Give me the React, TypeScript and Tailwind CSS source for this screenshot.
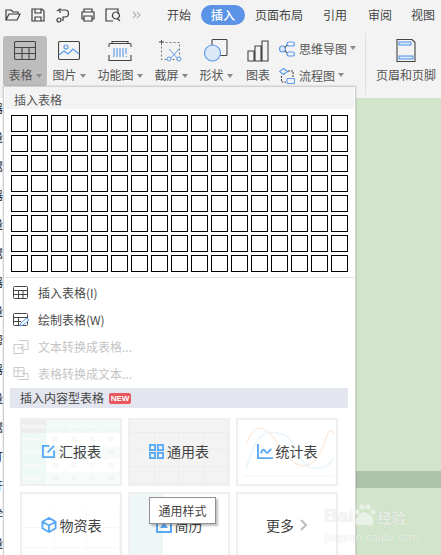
import React from "react";

const S = "#3c3c3c";
const B = "#5b9bea";
const font = { fontFamily: '"Noto Sans CJK SC", "Liberation Sans", sans-serif' };

function Caret() {
  return <span className="inline-block ml-[3px] mb-[2px] w-0 h-0 border-x-[3px] border-x-transparent border-t-[4px] border-t-[#8a8a8a]" />;
}

function QA({ children }: { children: React.ReactNode }) {
  return <svg width="16" height="16" viewBox="0 0 16 16" fill="none" stroke={S} strokeWidth="1.2" className="shrink-0">{children}</svg>;
}

function Tool({ w, label, caret, active, children }: { w: string; label: string; caret?: boolean; active?: boolean; children: React.ReactNode }) {
  return (
    <div className={`${w} h-[50px] rounded-[3px] flex flex-col items-center shrink-0 ${active ? "bg-[#bdbdbd]" : ""}`}>
      <div className="h-[29px] flex items-center justify-center">{children}</div>
      <div className="mt-[2px] text-[12px] leading-[16px] text-[#555] whitespace-nowrap">{label}{caret && <Caret />}</div>
    </div>
  );
}

function Card({ label, icon, children, className = "" }: { label: string; icon?: React.ReactNode; children?: React.ReactNode; className?: string }) {
  return (
    <div className={`relative w-[102px] h-[68px] border-2 border-[#efefef] overflow-hidden flex items-center justify-center pb-[2px] ${className}`}>
      <div className="absolute inset-0 opacity-50">{children}</div>
      <div className="relative flex items-center gap-[3px] text-[14px] text-[#444]">{icon}{label}</div>
    </div>
  );
}

function MenuRow({ label, disabled, children }: { label: string; disabled?: boolean; children: React.ReactNode }) {
  return (
    <div className={`h-[27px] flex items-center pl-[7px] text-[12px] ${disabled ? "text-[#c4c4c4]" : "text-[#4a4a4a]"}`}>
      <svg width="18" height="16" viewBox="0 0 18 16" fill="none" stroke={disabled ? "#c8c8c8" : "#444"} strokeWidth="1" className="shrink-0">{children}</svg>
      <span className="ml-[8px]">{label}</span>
    </div>
  );
}

const leftGlyphs = ["器", "量", "鬻", "器", "量", "鬻", "器", "量", "帮", "器", "量", "鬻", "打", "开", "学", "量"];
const reportCols = ["Alpha", "Beta", "Gamma", "Delta"];

export default function App() {
  return (
    <div className="relative w-[441px] h-[555px] overflow-hidden bg-[#f3f3f3]" style={font}>
      {/* title row */}
      <div className="h-[30px] flex items-center pl-[5px] text-[12px] text-[#444] whitespace-nowrap">
        <div className="flex items-center gap-[9px] w-[162px]">
          <QA><path d="M1 13V3h5l2 2h5v2M1 13l3-6h11l-3 6z" /></QA>
          <QA><path d="M2 2h10l2 2v10H2zM5 2v4h6V2M5 14v-4h6v4" /></QA>
          <QA><path d="M6 3h4a3 3 0 0 1 0 7H8v4M2 4l3-2v4M2 13a2 2 0 1 0 4 0 2 2 0 0 0-4 0" /></QA>
          <QA><path d="M4 5V2h8v3M4 12H2V5h12v7h-2M4 9h8v5H4z" /></QA>
          <QA><path d="M13 7V2H1v12h7M11 12a3.5 3.5 0 1 0-.1 0M12 11l3 3" /></QA>
          <svg width="11" height="8" viewBox="0 0 11 8" fill="none" stroke="#b5b5b5" strokeWidth="1.2" className="shrink-0"><path d="M3 1l3 3-3 3M7 1l3 3-3 3" /></svg>
        </div>
        <span className="w-[34px]">开始</span>
        <span className="w-[44px] h-[20px] rounded-full bg-[#5b93e6] text-white font-medium flex items-center justify-center">插入</span>
        <span className="ml-[10px]">页面布局</span>
        <span className="ml-[20px]">引用</span>
        <span className="ml-[21px]">审阅</span>
        <span className="ml-[19px]">视图</span>
      </div>

      {/* ribbon */}
      <div className="h-[68px] pt-[6px] pl-[3px] flex">
        <Tool w="w-[44px]" label="表格" caret active>
          <svg width="22" height="19" viewBox="0 0 22 19" fill="none" stroke="#444" strokeWidth="1.1"><rect x="0.5" y="0.5" width="21" height="18" rx="1.5" /><path d="M1 6.5h20M1 12.5h20M8 6.5v12M15 6.5v12" /></svg>
        </Tool>
        <Tool w="w-[38px] ml-[3px]" label="图片" caret>
          <svg width="22" height="19" viewBox="0 0 22 19" fill="none" stroke="#444" strokeWidth="1.1"><rect x="0.5" y="0.5" width="21" height="18" rx="1.5" /><circle cx="8" cy="6" r="2" stroke={B} /><path d="M1 14l5-4 4 3 5-5 6 5" stroke={B} /></svg>
        </Tool>
        <Tool w="w-[48px] ml-[8px]" label="功能图" caret>
          <svg width="24" height="22" viewBox="0 0 24 22" fill="none" stroke="#444" strokeWidth="1.1"><path d="M4 3V1.5h16V3M1 7V4.5a1 1 0 0 1 1-1h20a1 1 0 0 1 1 1V7M1 15v5.5h22V15" /><path d="M6 8v9M9 8v9M12 8v9M15 8v9M18 8v6M18 16v1" stroke={B} /></svg>
        </Tool>
        <Tool w="w-[42px] ml-[6px]" label="截屏" caret>
          <svg width="24" height="22" viewBox="0 0 24 22" fill="none" strokeWidth="1"><path d="M0 2h5M2.5 0v5" stroke="#444" /><rect x="2.5" y="2.5" width="18" height="17" stroke="#777" strokeDasharray="2 2" /><path d="M10 9l9 10M20 9l-9 10" stroke={B} /><circle cx="10" cy="19" r="2" fill="#f3f3f3" stroke={B} /><circle cx="20" cy="19" r="2" fill="#f3f3f3" stroke={B} /></svg>
        </Tool>
        <Tool w="w-[38px] ml-[5px]" label="形状" caret>
          <svg width="24" height="23" viewBox="0 0 24 23" fill="none" strokeWidth="1.1"><rect x="8" y="0.5" width="15" height="16" rx="1" stroke="#444" /><circle cx="8.5" cy="14" r="8" fill="#dce8f8" stroke={B} /></svg>
        </Tool>
        <Tool w="w-[32px] ml-[7px]" label="图表">
          <svg width="22" height="22" viewBox="0 0 22 22" fill="none" stroke="#444" strokeWidth="1.1"><path d="M1 21V11h6v10zM8 21V6h6v15zM15 21V1h6v20z" /></svg>
        </Tool>
        <div className="ml-[5px] w-[78px] -mt-px shrink-0 flex flex-col text-[12px] text-[#555]">
          <div className="h-[27px] flex items-center whitespace-nowrap">
            <svg width="16" height="16" viewBox="0 0 16 16" fill="none" stroke={B} strokeWidth="1.1" className="shrink-0 mr-[4px]"><circle cx="3.5" cy="8" r="3" fill="#dce8f8" /><rect x="8" y="1" width="7.5" height="4" rx="2" /><rect x="8" y="11" width="7.5" height="4" rx="2" /><path d="M6 6.5l2-2.5M6 9.5l2 2.5" stroke="#444" /></svg>
            思维导图<Caret />
          </div>
          <div className="h-[27px] flex items-center whitespace-nowrap">
            <svg width="16" height="16" viewBox="0 0 16 16" fill="none" stroke={B} strokeWidth="1.1" className="shrink-0 mr-[4px]"><path d="M4.5 0.5l4 3-4 3-4-3z" /><rect x="8" y="10.5" width="7.5" height="5" rx="1" /><path d="M9 3h5v6M2.5 8v6H7" stroke="#444" strokeDasharray="2 1" /></svg>
            流程图<Caret />
          </div>
        </div>
        <div className="w-px h-[62px] -mt-[3px] ml-[8px] bg-[#e0e0e0] shrink-0" />
        <Tool w="w-[62px] ml-[9px]" label="页眉和页脚">
          <svg width="20" height="23" viewBox="0 0 20 23" fill="none" strokeWidth="1.1"><path d="M1 0.5h15l3 3v19H1z" stroke="#444" /><rect x="3" y="3" width="12" height="3" stroke={B} fill="#dce8f8" /><rect x="3" y="17" width="14" height="3" stroke={B} fill="#dce8f8" /></svg>
        </Tool>
      </div>

      {/* document background */}
      <div className="absolute left-0 right-0 top-[98px] bottom-0 bg-[#d0e5ca]">
        <div className="absolute left-0 right-0 top-[373px] h-[17px] bg-[#adc3a9]" />
        <div className="absolute left-0 top-0 bottom-0 w-[4px] bg-white overflow-hidden text-[11px] leading-[20px] text-[#222]">
          {leftGlyphs.map((g, i) => <div key={i} className="w-[12px] -ml-[8px] h-[29px]">{g}</div>)}
        </div>
      </div>

      {/* dropdown panel */}
      <div className="absolute left-[3px] top-[86px] w-[353px] h-[469px] bg-white border-l border-t border-r border-[#d0d0d0] shadow-[0_0_2px_rgba(0,0,0,0.2)]">
        <div className="h-[22px] mx-px bg-[#f3f3f3] pl-[9px] pt-[3px] flex items-center text-[12px] text-[#555]">插入表格</div>
        <div className="ml-[7px] mt-[6px] grid grid-cols-[repeat(17,17px)] auto-rows-[17px] gap-[3px]">
          {Array.from({ length: 136 }).map((_, i) => <div key={i} className="border border-black bg-white" />)}
        </div>
        <div className="mt-[5px] h-px bg-[#e2e2e2] mx-px" />
        <div className="mt-[1px] mb-[1px] pl-px">
          <MenuRow label="插入表格(I)"><rect x="1.5" y="1.5" width="14" height="12" rx="1" /><path d="M2 5.5h13M2 9.5h13M6.5 5.5v8M11 5.5v8" /></MenuRow>
          <MenuRow label="绘制表格(W)"><rect x="1.5" y="1.5" width="14" height="12" rx="1" /><path d="M2 5.5h13M2 9.5h7M6.5 5.5v8" /><path d="M8 14l1-3 6-5 2 2-6 5z" stroke={B} fill="#fff" /></MenuRow>
          <MenuRow label="文本转换成表格..." disabled><path d="M7 1.5h9v9H12M2 5.5h9v9H2z" /><path d="M5 9h5M9 7l2 2-2 2" /></MenuRow>
          <MenuRow label="表格转换成文本..." disabled><path d="M2 1.5h10v9H2zM2 5h10M6 1.5v9M7 13.5h9M10 7.5h6v6" /></MenuRow>
        </div>
        <div className="ml-[6px] w-[338px] h-[20px] bg-[#e3e6ee] pl-[10px] flex items-center text-[12px] text-[#444]">
          插入内容型表格
          <span className="ml-[5px] w-[22px] h-[11px] rounded-[2px] bg-[#e8595f] text-white text-[8px] font-bold leading-[11px] text-center" style={{ fontFamily: '"Liberation Sans", sans-serif' }}>NEW</span>
        </div>
        <div className="ml-[16px] mt-[10px] grid grid-cols-[repeat(3,102px)] gap-[6px]">
          <Card label="汇报表" icon={<svg width="15" height="15" viewBox="0 0 16 16" fill="none" stroke="#5aa9f5" strokeWidth="2"><path d="M9 2H2v12h12V7M7 9l7-7" /></svg>}>
            <div className="grid grid-cols-[24px_1fr] h-full text-[5px] leading-[13px] text-[#dcdcdc]" style={{ fontFamily: '"Liberation Sans", sans-serif' }}>
              <div className="bg-[#dff2ea] text-white">
                <div className="h-[13px] bg-[#dcdcdc] whitespace-nowrap overflow-hidden">Population</div>
                {[1, 2, 3, 4].map((n) => <div key={n} className="h-[13px]">Sample1</div>)}
              </div>
              <div>
                {[0, 1, 2, 3, 4].map((r) => (
                  <div key={r} className={`h-[13px] flex justify-around ${r === 0 ? "bg-[#e5f5ee] text-white" : r % 2 ? "bg-white" : "bg-[#f0f8f4]"}`}>
                    {r === 0 ? reportCols.map((c) => <span key={c}>{c}</span>) : [85, 62, 71, 25].map((c) => <span key={c}>{c}</span>)}
                  </div>
                ))}
              </div>
            </div>
          </Card>
          <Card label="通用表" className="bg-[#f3f3f3]" icon={<svg width="15" height="15" viewBox="0 0 16 16" fill="none" stroke="#5aa9f5" strokeWidth="2"><rect x="1" y="1" width="5.5" height="5.5" /><rect x="9.5" y="1" width="5.5" height="5.5" /><rect x="1" y="9.5" width="5.5" height="5.5" /><rect x="9.5" y="9.5" width="5.5" height="5.5" /></svg>}>
            <div className="grid grid-cols-4 grid-rows-3 h-[52px] mt-[12px] border-t border-[#e8e8e8]">
              {Array.from({ length: 12 }).map((_, i) => <div key={i} className="border-b border-r border-[#e8e8e8]" />)}
            </div>
          </Card>
          <Card label="统计表" icon={<svg width="16" height="15" viewBox="0 0 17 16" fill="none" stroke="#5aa9f5" strokeWidth="2"><path d="M1 0v15h16M4 10c2-5 3-5 5-2s3 1 6-3" /></svg>}>
            <svg width="98" height="64" viewBox="0 0 98 64" fill="none"><path d="M8 24C16 4 24 4 36 18S56 52 72 44 88 0 96 14" stroke="#fbdcc4" strokeWidth="1.5" /><path d="M8 50C18 10 28 10 44 14S60 50 78 48 90 42 96 38" stroke="#d5ecf8" strokeWidth="1.5" /><path d="M6 56h90" stroke="#eee" /></svg>
          </Card>
          <Card label="物资表" icon={<svg width="16" height="16" viewBox="0 0 17 17" fill="none" stroke="#5aa9f5" strokeWidth="2"><path d="M8.5 1l7 4v7l-7 4-7-4V5zM1.5 5l7 4 7-4M8.5 9v7" /></svg>}>
            <div className="grid grid-cols-3 grid-rows-3 h-[60px] mt-[14px]">
              {Array.from({ length: 9 }).map((_, i) => <div key={i} className="border-b border-r border-[#f0f0f0]" />)}
            </div>
          </Card>
          <Card label="简历" icon={<svg width="16" height="16" viewBox="0 0 16 16" fill="none" stroke="#5aa9f5" strokeWidth="2"><path d="M1 1h14v14H1z" /><path d="M4 11h8L8 5z" fill="#5aa9f5" stroke="none" /></svg>}>
            <div className="w-[33px] h-full bg-[#e0eef2]" />
          </Card>
          <div className="w-[102px] h-[68px] border-2 border-[#efefef] flex items-center justify-center pb-[2px] text-[14px] text-[#444]">
            更多
            <svg width="9" height="12" viewBox="0 0 9 12" fill="none" stroke="#bcbcbc" strokeWidth="2" className="ml-[5px]"><path d="M2 1l5 5-5 5" /></svg>
          </div>
        </div>
      </div>

      {/* tooltip */}
      <div className="absolute left-[149px] top-[497px] w-[67px] h-[27px] bg-white border border-[#8f8f8f] shadow-[2px_2px_2px_rgba(0,0,0,0.25)] flex items-center justify-center text-[12px] text-[#444]">通用样式</div>

      {/* watermark lying over the panel */}
      <div className="absolute left-[324px] top-[502px] flex items-end text-white/70 font-bold [text-shadow:0_0_1px_rgba(0,0,0,0.15)]">
        <span className="text-[19px] leading-[28px]" style={{ fontFamily: '"Liberation Sans", sans-serif' }}>Bai</span>
        <svg width="26" height="28" viewBox="0 0 26 28" className="-ml-[3px] opacity-70" fill="#f4f8f2" stroke="#dfe6dc" strokeWidth="0.5"><circle cx="6" cy="10" r="2.5" /><circle cx="11" cy="5" r="2.7" /><circle cx="17" cy="5" r="2.7" /><circle cx="22" cy="10" r="2.5" /><path d="M13.5 10c5 0 10 7 9 11s-5 3-9 2-8 2-9-2 4-11 9-11z" /></svg>
        <span className="ml-[1px] text-[14px] leading-[26px]">经验</span>
      </div>
      <div className="absolute left-[325px] top-[531px] text-[11px] leading-[13px] text-white/70 tracking-[0.3px] [text-shadow:0_0_1px_rgba(0,0,0,0.12)]" style={{ fontFamily: '"Liberation Sans", sans-serif' }}>jingyan.baidu.com</div>
    </div>
  );
}
